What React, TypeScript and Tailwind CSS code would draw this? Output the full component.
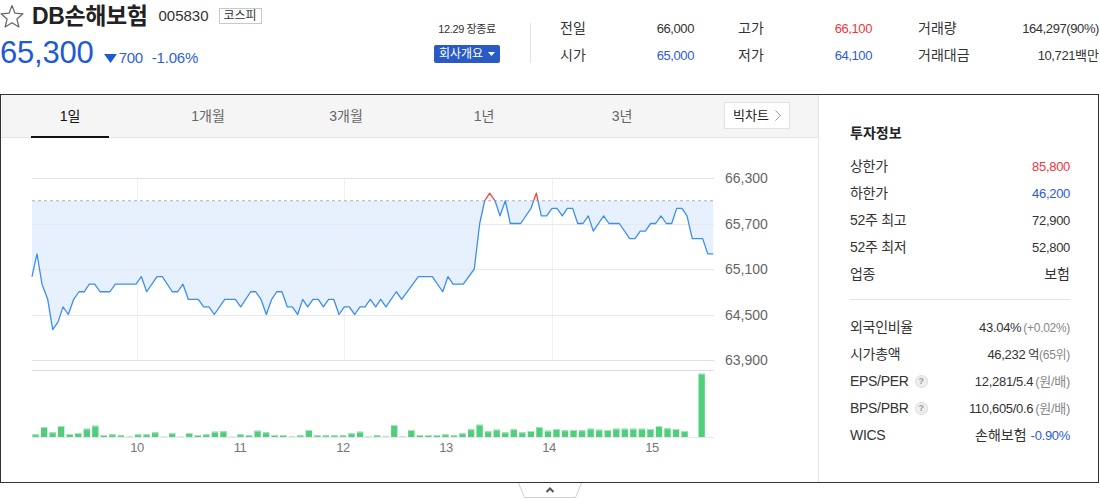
import React from 'react';

const Y = (p: number) => 178 + ((66300 - p) * 45.5) / 600;

const PTS: [number, number][] = [
  [32, 65000], [37, 65300], [42, 64900], [47.7, 64700], [52.7, 64300], [58, 64400], [63, 64600], [68.3, 64500],
  [73.7, 64700], [79, 64800], [84.3, 64800], [89.3, 64900], [94.7, 64900], [100, 64800], [110, 64800], [115.3, 64900],
  [136, 64900], [141.3, 65000], [146.7, 64800], [157, 65000], [162.3, 65000], [172.3, 64800], [177.7, 64800], [183, 64900],
  [188.3, 64700], [198.3, 64700], [203.7, 64600], [209, 64600], [214.3, 64500], [224.7, 64700], [235.3, 64700], [240.7, 64600],
  [250.7, 64800], [255.7, 64800], [261, 64700], [266.3, 64500], [271.7, 64700], [276.7, 64800], [282, 64800], [287.3, 64600],
  [292.3, 64600], [297.7, 64500], [302.7, 64700], [307.7, 64600], [313, 64700], [318.3, 64700], [323.3, 64600], [328.7, 64700],
  [333.7, 64700], [339, 64500], [344.3, 64600], [349.3, 64600], [354.7, 64500], [360, 64600], [365, 64600], [370.3, 64700],
  [375.7, 64600], [380.7, 64700], [386, 64600], [396.3, 64800], [401.7, 64700], [418.3, 65000], [432.3, 65000], [442.7, 64800],
  [448, 65000], [453, 64900], [463.3, 64900], [474.3, 65100], [479.7, 65700], [484.7, 66000], [489.7, 66100], [495, 66000],
  [500, 65800], [505.3, 66000], [510.3, 65700], [520.7, 65700], [531, 65900], [536.3, 66100], [541.3, 65800], [546.7, 65800],
  [552, 65900], [557, 65900], [562.3, 65800], [567.3, 65900], [572.7, 65900], [577.7, 65700], [583, 65700], [588.3, 65800],
  [593.3, 65600], [603.7, 65800], [609, 65700], [619.3, 65700], [629.7, 65500], [635, 65500], [640.3, 65600], [645.3, 65600],
  [650.7, 65700], [655.7, 65700], [661, 65800], [666.3, 65700], [671.7, 65700], [676.7, 65900], [682, 65900], [687, 65800],
  [692.3, 65500], [702.7, 65500], [707.7, 65300], [713.3, 65300],
];

const VOL = [
  2.7, 10, 4.7, 11, 3, 4, 8.3, 11.3, 2, 2.7,
  1.7, 1, 2.7, 2.7, 4.7, 0.7, 3.7, 0.7, 4, 2,
  2.7, 5.3, 5.7, 0.7, 2.7, 2, 6.3, 4.7, 2, 2,
  1, 1.7, 7, 1.7, 1.7, 1.7, 1.7, 3.7, 5.3, 1,
  1.7, 1.3, 12, 1, 7, 2, 2, 2, 2.7, 1.7,
  3.7, 7.7, 12.3, 5.7, 7.3, 4.7, 7.7, 4.7, 6, 10,
  6.3, 8, 6.7, 7, 6.7, 8.3, 7.3, 7, 8.3, 8.3,
  8.3, 8.3, 8, 11, 8.7, 8, 6, 0, 63.3,
];

const GRID = [
  { p: 66300, label: '66,300' },
  { p: 65700, label: '65,700' },
  { p: 65100, label: '65,100' },
  { p: 64500, label: '64,500' },
  { p: 63900, label: '63,900' },
];

const HOURS = [
  { x: 137, t: '10' },
  { x: 240, t: '11' },
  { x: 343, t: '12' },
  { x: 446, t: '13' },
  { x: 549, t: '14' },
  { x: 652, t: '15' },
];

function Chart() {
  const path = PTS.map(([x, p], i) => `${i ? 'L' : 'M'}${x},${Y(p).toFixed(2)}`).join(' ');
  const base = Y(66000);
  const area = `${path} L713.3,${base.toFixed(2)} L32,${base.toFixed(2)} Z`;
  return (
    <svg width="817" height="344" viewBox="1 138 817 344" className="block">
      <defs>
        <clipPath id="below">
          <rect x="0" y={base} width="1100" height="400" />
        </clipPath>
        <clipPath id="above">
          <rect x="0" y="0" width="1100" height={base} />
        </clipPath>
      </defs>
      <path d={area} fill="#e7f1fd" clipPath="url(#below)" />
      {[137, 344, 552].map((x) => (
        <line key={x} x1={x + 0.5} x2={x + 0.5} y1="178" y2="360" stroke="#edf0f4" strokeWidth="1" />
      ))}
      {GRID.map((g, i) => (
        <line
          key={g.p}
          x1="32"
          x2="714"
          y1={Math.round(Y(g.p)) + 0.5}
          y2={Math.round(Y(g.p)) + 0.5}
          stroke={i === 0 || i === 4 ? '#dde2e9' : '#e6e9ee'}
          strokeWidth="1"
        />
      ))}
      <line x1="32" x2="714" y1={base} y2={base} stroke="#aab3c0" strokeWidth="1" strokeDasharray="3 3" />
      <path d={path} fill="none" stroke="#3c8ef3" strokeWidth="1.3" strokeLinejoin="round" clipPath="url(#below)" />
      <path d={path} fill="none" stroke="#f2424c" strokeWidth="1.3" strokeLinejoin="round" clipPath="url(#above)" />
      {GRID.map((g) => (
        <text key={g.label} x="725" y={Y(g.p) + 5} fontSize="14" fill="#666">
          {g.label}
        </text>
      ))}
      <line x1="32" x2="714" y1="370.5" y2="370.5" stroke="#dcdce8" strokeWidth="1" />
      <line x1="32" x2="714" y1="437.5" y2="437.5" stroke="#e6e8ea" strokeWidth="1" />
      {VOL.map((h, i) =>
        h > 0 ? (
          <g key={i}>
            <rect x={32.4 + i * 8.54} y={437 - h} width="6.3" height={h} fill={h < 1.5 ? '#b9ecc8' : '#4fcf7b'} />
            {h >= 1.5 && <rect x={32.4 + i * 8.54} y={437 - h} width="6.3" height="1" fill="#a6e6bb" />}
          </g>
        ) : null,
      )}
      {HOURS.map((h) => (
        <text key={h.t} x={h.x} y="452" fontSize="13" fill="#777" textAnchor="middle" letterSpacing="-0.5">
          {h.t}
        </text>
      ))}
    </svg>
  );
}

function Star() {
  return (
    <svg width="24" height="26" viewBox="0 0 24 26">
      <polygon
        points="12,2.5 14.94,10.2 23,10.8 16.9,16 18.9,24 12,19.7 5.1,24 7.1,16 1,10.8 9.06,10.2"
        fill="none"
        stroke="#666"
        strokeWidth="1.2"
        strokeLinejoin="round"
      />
    </svg>
  );
}

function HelpDot() {
  return (
    <span className="ml-[6px] inline-flex h-[13px] w-[13px] items-center justify-center rounded-full border border-[#dcdcdc] bg-[#eeeeee] text-[9px] font-bold leading-none text-[#9a9a9a]">
      ?
    </span>
  );
}

type Row = { label: React.ReactNode; value: React.ReactNode };

const TOP_ROWS: Row[] = [
  { label: '상한가', value: <span className="text-[#f0343e]">85,800</span> },
  { label: '하한가', value: <span className="text-[#2d5bd4]">46,200</span> },
  { label: '52주 최고', value: '72,900' },
  { label: '52주 최저', value: '52,800' },
  { label: '업종', value: <span className="text-[14px] tracking-normal">보험</span> },
];

const BOTTOM_ROWS: Row[] = [
  {
    label: '외국인비율',
    value: (
      <>
        43.04%<span className="ml-[2px] text-[12px] text-[#888]">(+0.02%)</span>
      </>
    ),
  },
  {
    label: '시가총액',
    value: (
      <>
        46,232<span className="ml-[3px] text-[12px] text-[#333]">억</span>
        <span className="text-[12px] text-[#888]">(65위)</span>
      </>
    ),
  },
  {
    label: (
      <span className="flex items-center">
        EPS/PER
        <HelpDot />
      </span>
    ),
    value: (
      <>
        12,281/5.4<span className="ml-[2px] text-[13px] text-[#888]">(원/배)</span>
      </>
    ),
  },
  {
    label: (
      <span className="flex items-center">
        BPS/PBR
        <HelpDot />
      </span>
    ),
    value: (
      <>
        110,605/0.6<span className="ml-[2px] text-[13px] text-[#888]">(원/배)</span>
      </>
    ),
  },
  {
    label: 'WICS',
    value: (
      <>
        <span className="text-[14px] tracking-normal">손해보험</span>
        <span className="ml-[4px] text-[#2d5bd4]">-0.90%</span>
      </>
    ),
  },
];

function InfoRows({ rows }: { rows: Row[] }) {
  return (
    <div className="flex flex-col">
      {rows.map((r, i) => (
        <div key={i} className="flex h-[27px] items-center justify-between">
          <span className="text-[14px] tracking-[-0.3px] text-[#333]">{r.label}</span>
          <span className="flex items-baseline text-[13px] tracking-[-0.3px] text-[#333]">{r.value}</span>
        </div>
      ))}
    </div>
  );
}

function Cell({ label, value, color, w, ml }: { label: string; value: React.ReactNode; color: string; w: string; ml: string }) {
  return (
    <div className={`flex items-center justify-between ${w} ${ml}`}>
      <span className="text-[14px] text-[#333]">{label}</span>
      <span className={`text-[13px] tracking-[-0.4px] ${color}`}>{value}</span>
    </div>
  );
}

const TABS = ['1일', '1개월', '3개월', '1년', '3년'];

export default function App() {
  return (
    <div className="h-[499px] w-[1100px] overflow-hidden bg-white font-['Liberation_Sans','Noto_Sans_CJK_KR',sans-serif] text-[#333]">
      {/* header */}
      <div className="flex h-[94px]">
        <div className="flex w-[434px] flex-col">
          <div className="flex h-[32px] items-center">
            <Star />
            <span className="ml-[8px] text-[23px] font-bold tracking-[-0.4px] text-[#222]">DB손해보험</span>
            <span className="ml-[11px] text-[15px] text-[#333]">005830</span>
            <span className="ml-[10px] flex h-[16px] items-center border border-[#c8c8c8] px-[4px] text-[12px] leading-none text-[#333]">
              코스피
            </span>
          </div>
          <div className="mt-[5px] flex items-baseline">
            <span className="text-[31px] leading-[31px] tracking-[-0.2px] text-[#1c5ad6]">65,300</span>
            <svg width="13" height="9" viewBox="0 0 13 9" className="mb-[3px] ml-[10px]">
              <polygon points="0,0 13,0 6.5,9" fill="#1c5ad6" />
            </svg>
            <span className="ml-[2px] text-[15px] tracking-[-0.3px] text-[#2e5fd6]">700</span>
            <span className="ml-[9px] text-[15px] tracking-[-0.2px] text-[#2e5fd6]">-1.06%</span>
          </div>
        </div>
        <div className="flex">
          <div className="flex w-[66px] flex-col items-center">
            <span className="mt-[21px] text-[11px] leading-[16px] tracking-[-0.4px] text-[#333]">12.29 장종료</span>
            <button className="mt-[8px] flex h-[18px] w-[66px] items-center justify-center gap-[5px] rounded-[2px] bg-[#2a5bc4] text-[12px] leading-none text-white">
              회사개요
              <svg width="7" height="4" viewBox="0 0 7 4">
                <polygon points="0,0 7,0 3.5,4" fill="#fff" />
              </svg>
            </button>
          </div>
          <div className="ml-[30px] mt-[23px] h-[40px] w-px bg-[#e2e2e2]" />
          <div className="ml-[29px] mt-[15px] flex flex-col">
            <div className="flex h-[27px]">
              <Cell label="전일" value="66,000" color="text-[#333]" w="w-[134px]" ml="ml-0" />
              <Cell label="고가" value="66,100" color="text-[#f0343e]" w="w-[134px]" ml="ml-[44px]" />
              <Cell label="거래량" value="164,297(90%)" color="text-[#333]" w="w-[181px]" ml="ml-[46px]" />
            </div>
            <div className="flex h-[27px]">
              <Cell label="시가" value="65,000" color="text-[#2d5bd4]" w="w-[134px]" ml="ml-0" />
              <Cell label="저가" value="64,100" color="text-[#2d5bd4]" w="w-[134px]" ml="ml-[44px]" />
              <Cell
                label="거래대금"
                value={
                  <>
                    10,721<span className="tracking-normal">백만</span>
                  </>
                }
                color="text-[#333]"
                w="w-[181px]"
                ml="ml-[46px]"
              />
            </div>
          </div>
        </div>
      </div>

      {/* main box */}
      <div className="flex h-[389px] w-[1099px] border border-[#333]">
        <div className="flex w-[817px] flex-col">
          <div className="flex h-[43px] items-stretch border-b border-[#e5e5e5] bg-[#f5f5f5]">
            {TABS.map((t, i) => (
              <div
                key={t}
                className={`relative flex w-[138px] items-center justify-center text-[14px] ${i === 0 ? 'text-[#111]' : 'text-[#666]'}`}
              >
                {t}
                {i === 0 && <span className="absolute bottom-[-1px] left-[30px] h-[2px] w-[78px] bg-[#111]" />}
              </div>
            ))}
            <div className="ml-auto mr-[28px] mt-[7px] flex h-[27px] w-[66px] items-center justify-center gap-[6px] border border-[#e2e2e2] bg-white text-[13px] text-[#222]">
              빅차트
              <svg width="6" height="11" viewBox="0 0 6 11">
                <polyline points="0.5,0.5 5.5,5.5 0.5,10.5" fill="none" stroke="#999" strokeWidth="1" />
              </svg>
            </div>
          </div>
          <Chart />
        </div>
        <div className="flex flex-1 flex-col border-l border-[#e5e5e5] pl-[31px] pr-[28px]">
          <div className="mt-[28px] text-[14px] font-bold leading-[20px] text-[#222]">투자정보</div>
          <div className="mt-[10px]">
            <InfoRows rows={TOP_ROWS} />
          </div>
          <div className="mt-[11px] h-px bg-[#e5e5e5]" />
          <div className="mt-[14px]">
            <InfoRows rows={BOTTOM_ROWS} />
          </div>
        </div>
      </div>

      {/* bottom toggle tab */}
      <div className="flex justify-center">
        <svg width="64" height="16" viewBox="0 0 64 16">
          <path d="M0.5,0 L6.5,14.5 L57.5,14.5 L63.5,0" fill="#fff" stroke="#cfcfcf" strokeWidth="1" />
          <polyline points="28.5,9 32,5.5 35.5,9" fill="none" stroke="#555" strokeWidth="2" />
        </svg>
      </div>
    </div>
  );
}
